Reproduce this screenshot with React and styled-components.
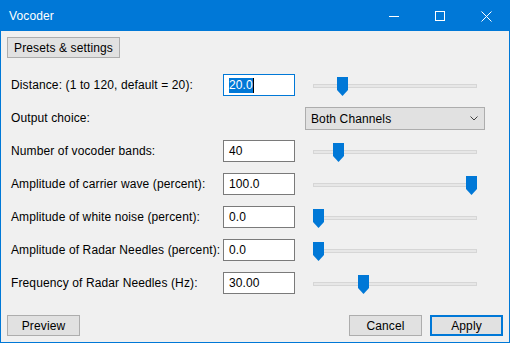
import React from 'react'
import styled, {createGlobalStyle} from 'styled-components'

const GlobalStyle = createGlobalStyle`
    html, body {
        margin: 0;
        padding: 0;
        background: #f0f0f0;
    }
    body {
        font-family: "Liberation Sans", Arial, sans-serif;
        font-size: 12px;
        letter-spacing: 0.12px;
        color: #000;
    }
`

const accent = '#0078d7'

const rows = [
    {label: 'Distance: (1 to 120, default = 20):', value: '20.0', pos: 0.157, focused: true},
    {label: 'Output choice:', select: 'Both Channels'},
    {label: 'Number of vocoder bands:', value: '40', pos: 0.131},
    {label: 'Amplitude of carrier wave (percent):', value: '100.0', pos: 1},
    {label: 'Amplitude of white noise (percent):', value: '0.0', pos: 0},
    {label: 'Amplitude of Radar Needles (percent):', value: '0.0', pos: 0},
    {label: 'Frequency of Radar Needles (Hz):', value: '30.00', pos: 0.294},
]

export default function App() {
    return (
        <>
            <GlobalStyle/>
            <Window>
                <TitleBar>
                    <Title>Vocoder</Title>
                    <CaptionButton>
                        <svg width="10" height="10" viewBox="0 0 10 10">
                            <line x1="0" y1="5.5" x2="10" y2="5.5" stroke="#fff" strokeWidth="1"/>
                        </svg>
                    </CaptionButton>
                    <CaptionButton>
                        <svg width="10" height="10" viewBox="0 0 10 10">
                            <rect x="0.5" y="0.5" width="9" height="9" fill="none" stroke="#fff" strokeWidth="1"/>
                        </svg>
                    </CaptionButton>
                    <CaptionButton>
                        <svg width="11" height="11" viewBox="0 0 11 11">
                            <path d="M0.5 0.5 L10.5 10.5 M10.5 0.5 L0.5 10.5" stroke="#fff" strokeWidth="1"/>
                        </svg>
                    </CaptionButton>
                </TitleBar>
                <Client>
                    <Button $width={113}>Presets &amp; settings</Button>
                    <Form>
                        {rows.map((r) => (
                            <React.Fragment key={r.label}>
                                <Label>{r.label}</Label>
                                {r.select ? (
                                    <>
                                        <span/>
                                        <Select>
                                            <span>{r.select}</span>
                                            <svg width="8" height="5" viewBox="0 0 8 5">
                                                <polyline points="0.5,0.5 4,4 7.5,0.5" fill="none" stroke="#404040" strokeWidth="1"/>
                                            </svg>
                                        </Select>
                                    </>
                                ) : (
                                    <>
                                        <Field $focused={r.focused}>
                                            {r.focused ? <><Selected>{r.value}</Selected><Caret/></> : r.value}
                                        </Field>
                                        <Slider>
                                            <Track/>
                                            <Thumb style={{left: 8 + Math.round(r.pos * 153)}}>
                                                <svg width="11" height="19" viewBox="0 0 11 19">
                                                    <polygon points="0,0 11,0 11,13 5.5,19 0,13" fill={accent}/>
                                                </svg>
                                            </Thumb>
                                        </Slider>
                                    </>
                                )}
                            </React.Fragment>
                        ))}
                    </Form>
                    <Footer>
                        <Button $width={73}>Preview</Button>
                        <Spacer/>
                        <Button $width={73}>Cancel</Button>
                        <Button $width={73} $primary>Apply</Button>
                    </Footer>
                </Client>
            </Window>
        </>
    )
}

const Window = styled.div`
    width: 510px;
    height: 343px;
    box-sizing: border-box;
    border: 1px solid ${accent};
    display: flex;
    flex-direction: column;
    background: #f0f0f0;
`
const TitleBar = styled.div`
    height: 30px;
    flex-shrink: 0;
    display: flex;
    align-items: center;
    background: ${accent};
    color: #fff;
`
const Title = styled.div`
    flex: 1;
    padding-left: 8px;
    font-size: 12px;
    padding-bottom: 1px;
`
const CaptionButton = styled.div`
    width: 46px;
    height: 30px;
    display: flex;
    align-items: center;
    justify-content: center;
`
const Client = styled.div`
    flex: 1;
    display: flex;
    flex-direction: column;
    align-items: flex-start;
    padding: 6px;
`
const Button = styled.div`
    box-sizing: border-box;
    width: ${p => p.$width}px;
    height: 21px;
    display: flex;
    align-items: center;
    justify-content: center;
    background: #e1e1e1;
    border: ${p => p.$primary ? `2px solid ${accent}` : '1px solid #adadad'};
`
const Form = styled.div`
    display: grid;
    grid-template-columns: 212px 82px 180px;
    grid-auto-rows: 22px;
    row-gap: 11px;
    margin: 16px 0 0 4px;
`
const Label = styled.div`
    display: flex;
    align-items: center;
`
const Field = styled.div`
    box-sizing: border-box;
    width: 72px;
    height: 22px;
    display: flex;
    align-items: center;
    padding-left: 5px;
    background: #fff;
    border: 1px solid ${p => p.$focused ? accent : '#7a7a7a'};
`
const Selected = styled.span`
    background: ${accent};
    color: #fff;
    line-height: 15px;
`
const Caret = styled.span`
    width: 1px;
    height: 15px;
    background: #000;
`
const Select = styled.div`
    box-sizing: border-box;
    height: 23px;
    display: flex;
    align-items: center;
    justify-content: space-between;
    padding: 0 6px 0 5px;
    background: #e1e1e1;
    border: 1px solid #adadad;
`
const Slider = styled.div`
    position: relative;
    height: 22px;
`
const Track = styled.div`
    box-sizing: border-box;
    height: 4px;
    margin: 10px 8px 0;
    background: #e7e7e7;
    border: 1px solid #d6d6d6;
`
const Thumb = styled.div`
    position: absolute;
    top: 3px;
    width: 11px;
    height: 19px;
    line-height: 0;
`
const Footer = styled.div`
    margin-top: auto;
    align-self: stretch;
    display: flex;
    gap: 8px;
`
const Spacer = styled.div`
    flex: 1;
`
